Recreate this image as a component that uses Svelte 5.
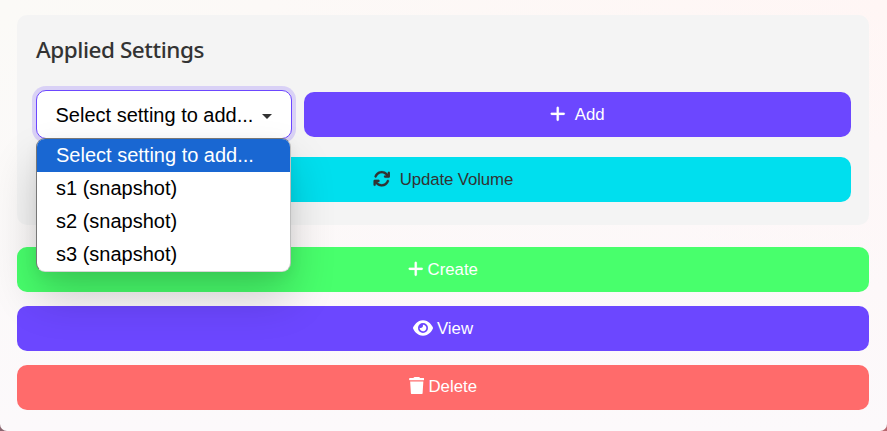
<script>
  const options = ['Select setting to add...', 's1 (snapshot)', 's2 (snapshot)', 's3 (snapshot)'];
  const selected = 0;
</script>

{#snippet plus()}
  <svg class="plus" viewBox="0 0 448 512"><path d="M256 80c0-17.7-14.3-32-32-32s-32 14.3-32 32V224H48c-17.7 0-32 14.3-32 32s14.3 32 32 32H192V432c0 17.7 14.3 32 32 32s32-14.3 32-32V288H400c17.7 0 32-14.3 32-32s-14.3-32-32-32H256V80z"/></svg>
{/snippet}

<div class="page">
  <main>
    <section>
      <h2>Applied Settings</h2>
      <div class="row">
        <div class="field">
          <div class="select">
            <span>{options[selected]}</span>
            <svg class="caret" viewBox="0 0 10 5"><path d="M0 0h10L5 5z"/></svg>
          </div>
          <ul>
            {#each options as option, i}
              <li class:active={i === selected}>{option}</li>
            {/each}
          </ul>
        </div>
        <button class="add">{@render plus()}<span>Add</span></button>
      </div>
      <button class="update">
        <svg class="sync" viewBox="0 0 512 512"><path d="M105.1 202.6c7.7-21.8 20.2-42.3 37.8-59.8c62.5-62.5 163.8-62.5 226.3 0L386.3 160H352c-17.7 0-32 14.3-32 32s14.3 32 32 32H463.9c17.7 0 32-14.3 32-32V80c0-17.7-14.3-32-32-32s-32 14.3-32 32v35.2L414.4 97.6c-87.5-87.5-229.3-87.5-316.8 0C73.2 122 55.6 150.7 44.8 181.4c-5.9 16.7 2.9 34.9 19.5 40.8s34.9-2.9 40.8-19.5zM39 289.3c-5 1.5-9.8 4.2-13.7 8.2c-4 4-6.7 8.8-8.1 14c-.3 1.2-.6 2.5-.8 3.8c-.3 1.7-.4 3.4-.4 5.1V432c0 17.7 14.3 32 32 32s32-14.3 32-32V396.9l17.6 17.5c87.5 87.4 229.3 87.4 316.7 0c24.4-24.4 42.1-53.1 52.9-83.7c5.9-16.7-2.9-34.9-19.5-40.8s-34.9 2.9-40.8 19.5c-7.7 21.8-20.2 42.3-37.8 59.8c-62.5 62.5-163.8 62.5-226.3 0l-.1-.1L125.6 352H160c17.7 0 32-14.3 32-32s-14.3-32-32-32H48.4c-1.6 0-3.2 .1-4.8 .3s-3.1 .5-4.6 1z"/></svg>
        <span>Update Volume</span>
      </button>
    </section>
    <div class="actions">
      <button class="create">{@render plus()}<span>Create</span></button>
      <button class="view">
        <svg class="eye" viewBox="0 0 576 512"><path d="M288 32c-80.8 0-145.5 36.8-192.6 80.6C48.6 156 17.3 208 2.5 243.7c-3.3 7.9-3.3 16.7 0 24.6C17.3 304 48.6 356 95.4 399.4C142.5 443.2 207.2 480 288 480s145.5-36.8 192.6-80.6c46.8-43.5 78.1-95.4 93-131.1c3.3-7.9 3.3-16.7 0-24.6c-14.9-35.7-46.2-87.7-93-131.1C433.5 68.8 368.8 32 288 32zM144 256a144 144 0 1 1 288 0 144 144 0 1 1 -288 0zm144-64c0 35.3-28.7 64-64 64c-7.1 0-13.9-1.2-20.3-3.3c-5.5-1.8-11.9 1.6-11.7 7.4c.3 6.9 1.3 13.8 3.2 20.7c13.7 51.2 66.4 81.6 117.6 67.9s81.6-66.4 67.9-117.6c-11.1-41.5-47.8-69.4-88.6-71.1c-5.8-.2-9.2 6.1-7.4 11.7c2.1 6.4 3.3 13.2 3.3 20.3z"/></svg>
        <span>View</span>
      </button>
      <button class="delete">
        <svg class="trash" viewBox="0 0 448 512"><path d="M135.2 17.7L128 32H32C14.3 32 0 46.3 0 64S14.3 96 32 96H416c17.7 0 32-14.3 32-32s-14.3-32-32-32H320l-7.2-14.3C307.4 6.8 296.3 0 284.2 0H163.8c-12.1 0-23.2 6.8-28.6 17.7zM416 128H32L53.2 467c1.6 25.3 22.6 45 47.9 45H346.9c25.3 0 46.3-19.7 47.9-45L416 128z"/></svg>
        <span>Delete</span>
      </button>
    </div>
  </main>
</div>

<style>
  .page {
    height: 431px;
    overflow: hidden;
    background: linear-gradient(90deg, #8b6670, #b86870);
  }
  main {
    box-sizing: border-box;
    height: 431px;
    padding: 15px 18px 0 17px;
    border-radius: 0 0 7px 7px;
    background: linear-gradient(180deg, #fbf9fc00 0%, #fcf9fb 100%), linear-gradient(90deg, #fbfaf7 0%, #fcf9f7 30%, #fff6f5 100%);
    font-family: "Liberation Sans", Arial, sans-serif;
  }
  section {
    box-sizing: border-box;
    height: 210px;
    padding: 19px 18px 0 19px;
    border-radius: 10px;
    background: #f4f4f4;
  }
  h2 {
    margin: 0 0 25px;
    font: 550 22.5px/31px "Noto Sans", "Open Sans", sans-serif;
    letter-spacing: -0.45px;
    color: #333;
    white-space: nowrap;
  }
  .row {
    display: flex;
    align-items: center;
    gap: 12px;
    height: 49px;
    margin-bottom: 18px;
  }
  .field {
    position: relative;
    width: 256px;
    flex: none;
  }
  .select {
    box-sizing: border-box;
    display: flex;
    align-items: center;
    justify-content: space-between;
    height: 49px;
    padding: 2px 19px 0 18.5px;
    border: 1px solid #6c47ff;
    border-radius: 10px;
    background: #fff;
    box-shadow: 0 0 0 4px #6c47ff33;
    font-size: 20px;
    color: #000;
    white-space: nowrap;
  }
  .caret {
    width: 10px;
    height: 5px;
    fill: #333;
    margin-top: 1px;
  }
  ul {
    position: absolute;
    z-index: 2;
    top: 48px;
    left: 0;
    box-sizing: border-box;
    width: 254.5px;
    height: 134px;
    margin: 0;
    padding: 0;
    overflow: hidden;
    list-style: none;
    border: 1px solid #777;
    border-color: #777 #8888 #8885 #777;
    border-radius: 9px;
    background: #fff;
    box-shadow: 0 25px 45px #00000030, 0 4px 14px #0000000f;
    font-size: 20px;
    color: #000;
  }
  li {
    height: 33px;
    padding-left: 19px;
    line-height: 33px;
    white-space: nowrap;
  }
  li.active {
    background: #1967d2;
    color: #fff;
  }
  button {
    display: flex;
    align-items: center;
    justify-content: center;
    gap: 4px;
    width: 100%;
    height: 45px;
    padding: 0;
    border: 0;
    border-radius: 10px;
    font-family: inherit;
    font-size: 16.8px;
    color: #fff;
  }
  svg {
    display: block;
    flex: none;
    fill: currentColor;
  }
  button svg { margin-bottom: 2px; }
  .plus, .trash { width: 15.5px; height: 17.6px; }
  .plus { stroke: currentColor; stroke-width: 6; }
  .sync { width: 17.5px; height: 17.5px; stroke: currentColor; stroke-width: 6; }
  .eye { width: 20px; height: 18px; }
  .add, .view { background: #6c47ff; }
  .add { flex: 1; gap: 9px; }
  .update { gap: 9.5px; padding-right: 1px; background: #00dfee; color: #333; }
  .update span { letter-spacing: -0.1px; }
  .actions {
    display: flex;
    flex-direction: column;
    gap: 14px;
    margin-top: 22px;
  }
  .create { background: #48ff6c; }
  .delete { padding-bottom: 2px; background: #ff6b6b; }
</style>
